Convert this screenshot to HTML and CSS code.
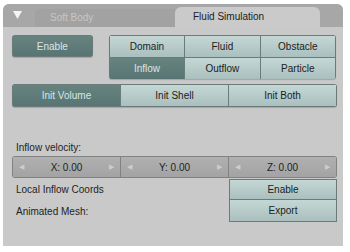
FILE: index.html
```html
<!DOCTYPE html>
<html>
<head>
  <title>Fluid Simulation panel</title>
  <link rel="stylesheet" href="styles.css">
</head>
<body>
  <div class="panel">
    <div class="tabs">
      <div class="toggle">
        <svg width="9" height="8" viewBox="0 0 9 8"><polygon points="0,0 9,0 4.5,8" fill="#f4f4f4"/></svg>
      </div>
      <div class="tab tab_off">Soft Body</div>
      <div class="tab tab_on">Fluid Simulation</div>
    </div>

    <div class="content">
      <div class="toprow">
        <div class="group single">
          <button class="btn dark">Enable</button>
        </div>
        <div class="group types">
          <button class="btn">Domain</button>
          <button class="btn">Fluid</button>
          <button class="btn">Obstacle</button>
          <button class="btn dark">Inflow</button>
          <button class="btn">Outflow</button>
          <button class="btn">Particle</button>
        </div>
      </div>

      <div class="group init">
        <button class="btn dark">Init Volume</button>
        <button class="btn">Init Shell</button>
        <button class="btn">Init Both</button>
      </div>

      <p class="label">Inflow velocity:</p>
      <div class="velocity">
        <div class="num"><span class="arrow">&#9664;</span><span>X: 0.00</span><span class="arrow">&#9654;</span></div>
        <div class="num"><span class="arrow">&#9664;</span><span>Y: 0.00</span><span class="arrow">&#9654;</span></div>
        <div class="num"><span class="arrow">&#9664;</span><span>Z: 0.00</span><span class="arrow">&#9654;</span></div>
      </div>

      <div class="options">
        <span class="label opt_label">Local Inflow Coords</span>
        <button class="btn">Enable</button>
        <span class="label opt_label">Animated Mesh:</span>
        <button class="btn">Export</button>
      </div>
    </div>
  </div>
</body>
</html>
```

FILE: styles.css
```css
body{
 margin: 0;
 background-color: white;
 font-family: "Liberation Sans", Arial, sans-serif;
 font-size: 10px;
}
.panel{
 margin: 4px 0 0 3px;
 width: 340px;
 height: 242px;
 background-color: #c9c9c9;
 border-radius: 6px 6px 0 0;
}
.tabs{
 display: flex;
 height: 23px;
 background-color: #a7a7a7;
 border-radius: 6px 6px 0 0;
}
.toggle{
 width: 32px;
 padding: 6px 0 0 10px;
 box-sizing: border-box;
}
.tab{
 box-sizing: border-box;
}
.tab_off{
 width: 140px;
 margin-top: 5px;
 padding-left: 15px;
 line-height: 17px;
 background-color: #a2a2a2;
 color: #c6c6c6;
 border-radius: 5px 0 0 0;
}
.tab_on{
 width: 145px;
 margin-top: 3px;
 padding-left: 18px;
 line-height: 19px;
 background-color: #cacaca;
 color: #1c1c1c;
 border-radius: 6px 6px 0 0;
}
.content{
 padding: 8px 7px 0 9px;
}
.toprow{
 display: flex;
 gap: 16px;
}
.group{
 display: grid;
 gap: 1px;
 padding: 1px;
 background-color: #6b7b7a;
 border-radius: 3px;
 overflow: hidden;
 box-sizing: border-box;
 box-shadow: 0 1px 1px rgba(0,0,0,0.18);
}
.single{
 width: 81px;
 height: 22px;
}
.types{
 width: 228px;
 height: 44px;
 grid-template-columns: repeat(3, 1fr);
 grid-template-rows: 21px 21px;
}
.btn{
 border: none;
 padding: 0;
 margin: 0;
 font-family: inherit;
 font-size: 10px;
 color: #1c2222;
 background: linear-gradient(#c4d7d5, #aac0be);
}
.btn.dark{
 color: #dbe5e4;
 background: linear-gradient(#66837f, #587574);
}
.init{
 margin-top: 5px;
 width: 325px;
 height: 23px;
 grid-template-columns: repeat(3, 1fr);
}
.label{
 margin: 0;
 color: #1e1e1e;
 padding-left: 4px;
}
p.label{
 margin-top: 35px;
 line-height: 12px;
}
.velocity{
 margin-top: 2px;
 width: 325px;
 height: 22px;
 display: grid;
 grid-template-columns: repeat(3, 1fr);
 gap: 1px;
 padding: 1px;
 box-sizing: border-box;
 background-color: #828282;
 border-radius: 3px;
 overflow: hidden;
}
.num{
 display: flex;
 justify-content: space-between;
 align-items: center;
 padding: 0 6px 0 6px;
 background: linear-gradient(#b0b0b0, #a3a3a3);
 color: #1e1e1e;
}
.arrow{
 font-size: 7px;
 color: #cdcdcd;
}
.options{
 display: grid;
 grid-template-columns: 1fr 108px;
 grid-template-rows: 21px 22px;
 margin-top: 1px;
 width: 325px;
 align-items: center;
}
.options .btn{
 height: 100%;
 border: 1px solid #6b7b7a;
 box-sizing: border-box;
}
.options .btn + .opt_label + .btn{
 border-top: none;
}
```
